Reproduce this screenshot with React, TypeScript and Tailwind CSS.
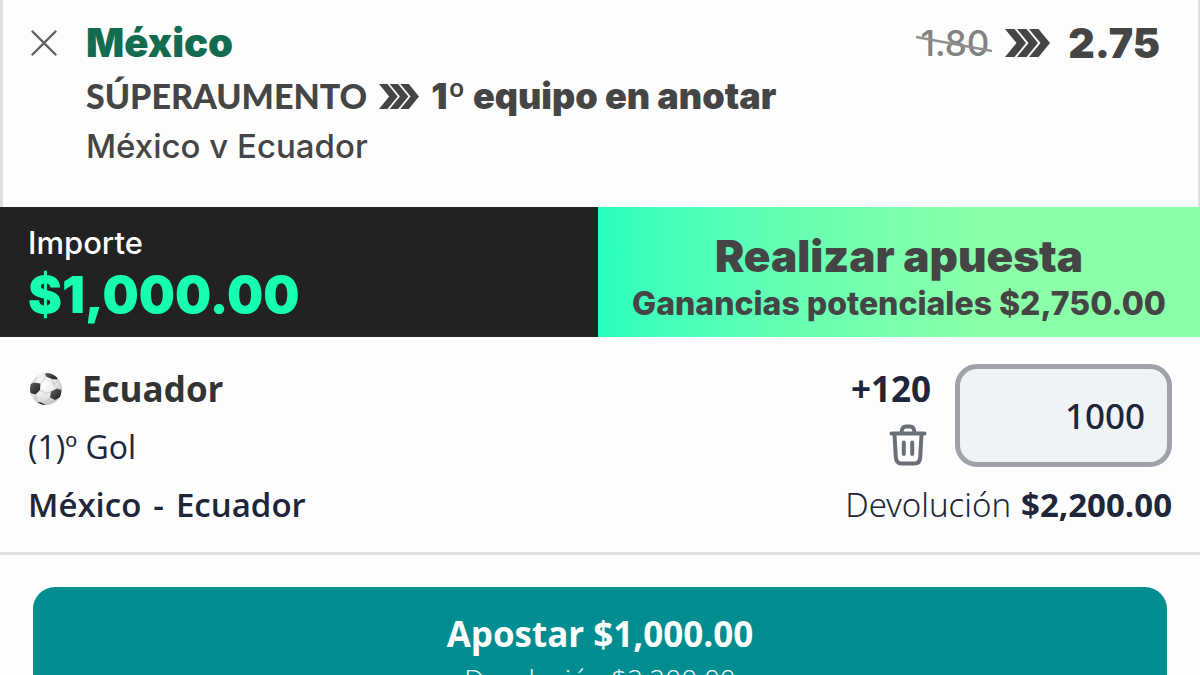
import { useState } from "react";

function Chevrons({ className }: { className: string }) {
  return (
    <svg viewBox="0 0 45 28" fill="currentColor" className={className} aria-hidden="true">
      {[0, 12, 24].map((x) => (
        <path key={x} transform={`translate(${x} 0)`} d="M0 0h9.500l11.500 14-11.500 14H0l11.500-14z" />
      ))}
    </svg>
  );
}

function CloseIcon() {
  return (
    <svg viewBox="0 0 26 26" className="size-[26px]" fill="none" stroke="#5f5f5f" strokeWidth="2.4" strokeLinecap="round">
      <path d="M1.5 1.5l23 23M24.5 1.5l-23 23" />
    </svg>
  );
}

function TrashIcon() {
  return (
    <svg
      viewBox="0 0 38 42"
      className="h-[42px] w-[38px]"
      fill="none"
      stroke="#6b6f78"
      strokeWidth="4"
      strokeLinecap="round"
      strokeLinejoin="round"
    >
      <path d="M2.5 9.5h33" />
      <path d="M12.5 9c0-4 1.600-6.500 4.500-6.500h4c2.900 0 4.500 2.500 4.500 6.500" />
      <path d="M5.500 10l1.300 23.500c.3 4 2.200 6 5.700 6h13c3.500 0 5.400-2 5.700-6L32.500 10" />
      <path d="M14.800 18.500v11.500M23.200 18.500v11.500" />
    </svg>
  );
}

function BallIcon() {
  return (
    <svg viewBox="0 0 34 34" className="size-[34px]" aria-hidden="true">
      <defs>
        <radialGradient id="ball" cx="40%" cy="35%" r="65%">
          <stop offset="0" stopColor="#ffffff" />
          <stop offset="0.6" stopColor="#e9e9e9" />
          <stop offset="1" stopColor="#c4c4c4" />
        </radialGradient>
        <linearGradient id="patch" x1="0" y1="0" x2="1" y2="1">
          <stop offset="0" stopColor="#666666" />
          <stop offset="1" stopColor="#1c1c1c" />
        </linearGradient>
        <clipPath id="ball-clip">
          <circle cx="18" cy="17" r="16" />
        </clipPath>
      </defs>
      <circle cx="18" cy="17" r="16" fill="url(#ball)" />
      <g clipPath="url(#ball-clip)">
        <path d="M17 1.500l6-1.500 7 4-1 3.500-5-.5-6-2.500z" fill="url(#patch)" />
        <path d="M1 13l4.500-2.500 7 1-.5 6.500-4.500 4.500L2 21z" fill="url(#patch)" />
        <path d="M23 19.500l6-3 4.500 1.500-1 7-5.500 3-5-2.500z" fill="url(#patch)" />
        <path d="M8 30l5 .5 5 2.500-7 2z" fill="#222222" />
        <path
          d="M12.500 11.500l5.500-7M24 7l1.500 5M12 18l6 3.500 5-2M25.500 12l3.500 4.500M22 25.500l-4 5M7.500 22.500l.5 7.500M5.500 10.500L9 5M25.500 12l5-3.500"
          fill="none"
          stroke="#bdbdbd"
          strokeWidth="0.8"
        />
      </g>
    </svg>
  );
}

function BoostedBet() {
  return (
    <section className="flex items-start border-l-3 border-r-2 border-[#dedede] pt-4 pr-[38px] pb-[37px] pl-7 text-[#454545]">
      <button type="button" aria-label="Cerrar" className="flex h-[54px] w-[55px] shrink-0 items-center">
        <CloseIcon />
      </button>
      <div className="grow">
        <div className="flex items-center justify-between">
          <h2 className="text-[40px] leading-[54px] font-black text-[#146c50]">México</h2>
          <div className="flex items-center">
            <span className="relative text-[35px] leading-[54px] font-medium text-[#828282]">
              1.80
              <svg
                viewBox="0 0 76 16"
                preserveAspectRatio="none"
                className="absolute top-5 -left-1 h-4 w-[76px]"
                aria-hidden="true"
              >
                <path d="M0 1l76 14" stroke="#8f8f8f" strokeWidth="2.5" />
              </svg>
            </span>
            <Chevrons className="ml-4 h-7 w-[45px]" />
            <strong className="ml-[18px] text-[41px] leading-[54px] font-black">2.75</strong>
          </div>
        </div>
        <div className="flex items-center text-[36px] leading-[52px] font-black">
          <span className="font-['Lato',sans-serif] text-[34px]">SÚPERAUMENTO</span>
          <Chevrons className="mx-3 h-[25px] w-10" />
          <span>1º equipo en anotar</span>
        </div>
        <p className="text-[33px] leading-[48px] font-medium">México v Ecuador</p>
      </div>
    </section>
  );
}

function StakeBar() {
  return (
    <section className="grid grid-cols-[299fr_301fr]">
      <div className="bg-[#222222] px-7 pt-4 pb-[11px]">
        <p className="text-[31px] leading-10 font-medium text-white">Importe</p>
        <p className="text-[51px] leading-[63px] font-black text-[#17ffb2]">$1,000.00</p>
      </div>
      <button
        type="button"
        className="flex flex-col items-center bg-linear-to-r from-[#26ffbe] to-[#8affa8] to-65% pt-6 text-[#454545]"
      >
        <span className="text-[44px] leading-[50px] font-black">Realizar apuesta</span>
        <span className="text-[32px] leading-[46px] font-extrabold">Ganancias potenciales $2,750.00</span>
      </button>
    </section>
  );
}

function Selection() {
  const [stake, setStake] = useState("1000");

  return (
    <section className="border-b-3 border-[#e2e2e6] px-7 pt-[23px] pb-[18px] font-['Open_Sans',sans-serif] text-[33px] leading-[58px] text-[#20263a]">
      <div className="flex justify-between">
        <div>
          <h3 className="flex items-center gap-5 text-[35px] font-bold text-[#333333]">
            <BallIcon />
            Ecuador
          </h3>
          <p className="text-[32px]">(1)º Gol</p>
        </div>
        <div className="flex items-start gap-6">
          <div className="flex flex-col items-end">
            <span className="text-[35px] font-bold">+120</span>
            <button type="button" aria-label="Eliminar" className="mt-1.5 mr-1">
              <TrashIcon />
            </button>
          </div>
          <input
            aria-label="Importe"
            inputMode="numeric"
            value={stake}
            onChange={(e) => setStake(e.target.value)}
            className="mt-1 h-[103px] w-[217px] rounded-[22px] border-5 border-[#a0a1a9] bg-[#f0f3f5] pr-[22px] text-right font-['Noto_Sans',sans-serif] text-[35px] font-medium outline-none"
          />
        </div>
      </div>
      <div className="flex justify-between">
        <p className="flex gap-3 font-semibold">
          <span>México</span>
          <span>-</span>
          <span>Ecuador</span>
        </p>
        <p className="flex gap-2.5">
          <span className="font-['Noto_Sans',sans-serif] font-light">Devolución</span>
          <strong className="font-bold">$2,200.00</strong>
        </p>
      </div>
    </section>
  );
}

export default function App() {
  return (
    <main className="h-screen overflow-hidden bg-[#fdfdfd] font-['Inter',sans-serif]">
      <BoostedBet />
      <StakeBar />
      <Selection />
      <div className="px-[33px] pt-8">
        <button
          type="button"
          className="flex w-full flex-col items-center rounded-[22px] bg-[#028d90] pt-[18px] pb-5 font-['Open_Sans',sans-serif] text-white"
        >
          <span className="text-[35px] leading-[58px] font-bold">Apostar $1,000.00</span>
          <span className="text-[28px] leading-8 font-light">Devolución $2,200.00</span>
        </button>
      </div>
    </main>
  );
}
